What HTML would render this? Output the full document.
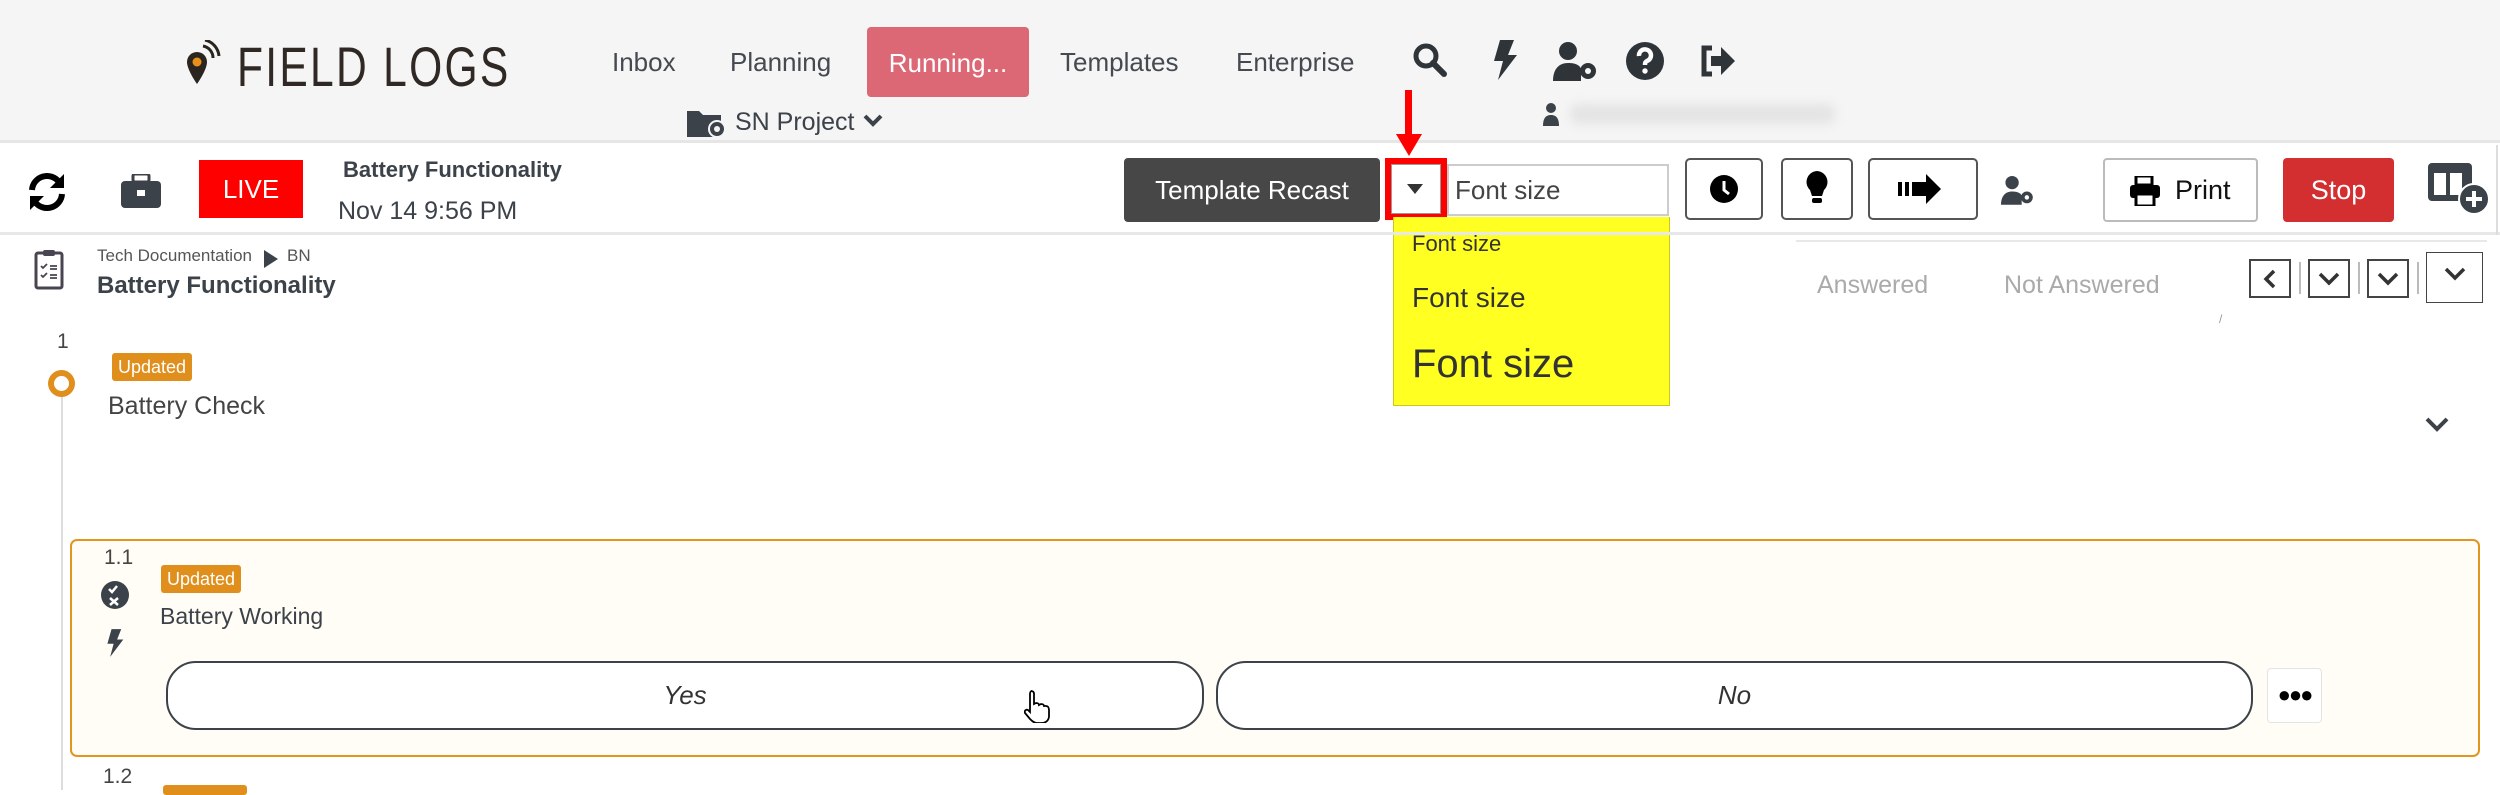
<!DOCTYPE html>
<html><head><meta charset="utf-8"><style>
*{margin:0;padding:0;box-sizing:border-box}
body{width:2500px;height:790px;overflow:hidden;background:#fff;font-family:"Liberation Sans",sans-serif;color:#3a3f45;position:relative}
.a{position:absolute}
.hdr{left:0;top:0;width:2500px;height:143px;background:#f5f5f5;border-bottom:3px solid #e6e6e6}
.nav{top:47px;font-size:26px;color:#444a50}
.bx{border:2px solid #555;border-radius:5px;background:#fff}
.upd{background:#e08f1d;color:#fff;font-size:18px;border-radius:3px;padding:3px 6px;line-height:22px}
.nb{border:2px solid #444;background:#fff;display:flex;align-items:center;justify-content:center}
</style></head><body>
<div class="a hdr"></div>
<svg class="a" style="left:183px;top:40px" width="40" height="50" viewBox="0 0 40 50"><path d="M14 12a10 10 0 0 0-10 10c0 8 10 22 10 22s10-14 10-22a10 10 0 0 0-10-10z" fill="#2b2520"/><circle cx="14" cy="22" r="4.5" fill="#e8901a"/><path d="M20 6a12 12 0 0 1 10 12M22 0a18 18 0 0 1 14 16" stroke="#2b2520" stroke-width="3" fill="none"/></svg>
<div class="a" style="left:237px;top:34px;font-size:56px;color:#2f2824;letter-spacing:3px;font-weight:300;transform:scaleX(0.76);transform-origin:left">FIELD LOGS</div>
<div class="a nav" style="left:612px">Inbox</div>
<div class="a nav" style="left:730px">Planning</div>
<div class="a" style="left:867px;top:27px;width:162px;height:70px;background:#dc6876;border-radius:4px;color:#fff;font-size:26px;text-align:center;line-height:72px">Running...</div>
<div class="a nav" style="left:1060px">Templates</div>
<div class="a nav" style="left:1236px">Enterprise</div>
<svg class="a" style="left:1412px;top:42px" width="36" height="36" viewBox="0 0 36 36"><circle cx="14" cy="14" r="10" stroke="#2f3439" stroke-width="5" fill="none"/><path d="M21 21l11 11" stroke="#2f3439" stroke-width="6" stroke-linecap="round"/></svg>
<svg class="a" style="left:1492px;top:40px" width="26" height="40" viewBox="0 0 26 40"><path d="M8 0h14l-6 15h9L6 40l5-19H2z" fill="#2f3439"/></svg>
<svg class="a" style="left:1553px;top:41px" width="46" height="40" viewBox="0 0 46 40"><circle cx="15" cy="10" r="9" fill="#2f3439"/><path d="M0 40c0-12 6-18 15-18s12 3 13 6v12z" fill="#2f3439"/><circle cx="35" cy="30" r="8" fill="#2f3439"/><circle cx="35" cy="30" r="3" fill="#f5f5f5"/></svg>
<svg class="a" style="left:1626px;top:42px" width="38" height="38" viewBox="0 0 38 38"><circle cx="19" cy="19" r="19" fill="#2f3439"/><path d="M13 14a6 6 0 1 1 8 5c-2 1-2 2-2 4" stroke="#fff" stroke-width="4.5" fill="none"/><circle cx="19" cy="29" r="2.7" fill="#fff"/></svg>
<svg class="a" style="left:1698px;top:44px" width="38" height="34" viewBox="0 0 38 34"><path d="M14 4H6v26h8" stroke="#2f3439" stroke-width="5" fill="none"/><path d="M13 12h10V3l14 14-14 14v-9H13z" fill="#2f3439"/></svg>
<svg class="a" style="left:687px;top:108px" width="40" height="30" viewBox="0 0 40 30"><path d="M0 3h12l4 4h18v22H0z" fill="#3c4249"/><circle cx="30" cy="21" r="8" fill="#3c4249" stroke="#f5f5f5" stroke-width="2"/><circle cx="30" cy="21" r="3" fill="#f5f5f5"/></svg>
<div class="a" style="left:735px;top:108px;font-size:25px;color:#3c4249">SN Project</div>
<svg class="a" style="left:862px;top:113px" width="22" height="16" viewBox="0 0 22 16"><path d="M3 3l8 8 8-8" stroke="#3c4249" stroke-width="4" fill="none"/></svg>
<svg class="a" style="left:1543px;top:102px" width="16" height="24" viewBox="0 0 16 24"><circle cx="8" cy="6" r="5" fill="#3c4249"/><path d="M0 24c0-8 3-11 8-11s8 3 8 11z" fill="#3c4249"/></svg>
<div class="a" style="left:1570px;top:104px;width:265px;height:20px;background:#e4e4e4;filter:blur(5px);border-radius:8px"></div>
<svg class="a" style="left:26px;top:172px" width="42" height="40" viewBox="0 0 42 40"><path d="M6 18A15 15 0 0 1 33 10" stroke="#000" stroke-width="6" fill="none"/><path d="M38 2v14H24z" fill="#000"/><path d="M36 22A15 15 0 0 1 9 30" stroke="#000" stroke-width="6" fill="none"/><path d="M4 38V24h14z" fill="#000"/></svg>
<svg class="a" style="left:121px;top:174px" width="40" height="34" viewBox="0 0 40 34"><rect x="12" y="0" width="16" height="8" rx="2" stroke="#3c4249" stroke-width="3" fill="none"/><rect x="0" y="7" width="40" height="27" rx="4" fill="#3c4249"/><rect x="16" y="16" width="8" height="6" fill="#fff"/></svg>
<div class="a" style="left:199px;top:160px;width:104px;height:58px;background:#f00;color:#fff;font-size:26px;text-align:center;line-height:58px">LIVE</div>
<div class="a" style="left:343px;top:157px;font-size:22px;font-weight:bold;color:#3c4249">Battery Functionality</div>
<div class="a" style="left:338px;top:197px;font-size:25px;color:#3c4249">Nov 14 9:56 PM</div>
<div class="a" style="left:1124px;top:158px;width:256px;height:64px;background:#474747;border-radius:4px;color:#fff;font-size:26px;text-align:center;line-height:64px">Template Recast</div>
<div class="a" style="left:1385px;top:158px;width:62px;height:62px;border:6px solid #f00"></div>
<div class="a" style="left:1391px;top:164px;width:50px;height:50px;background:#fff;border:1px solid #999"></div>
<svg class="a" style="left:1407px;top:184px" width="16" height="10" viewBox="0 0 16 10"><path d="M0 0h16L8 10z" fill="#333"/></svg>
<div class="a" style="left:1447px;top:164px;width:222px;height:52px;background:#fff;border:2px solid #ccc;font-size:26px;color:#444;padding:9px 6px">Font size</div>
<div class="a" style="left:1405px;top:90px;width:7px;height:52px;background:#f00"></div>
<svg class="a" style="left:1396px;top:134px" width="26" height="22" viewBox="0 0 26 22"><path d="M0 0h26L13 22z" fill="#f00"/></svg>
<div class="a" style="left:1393px;top:217px;width:277px;height:189px;background:#ffff22;border:1px solid #c8c820;border-top:none"></div>
<div class="a" style="left:1412px;top:231px;font-size:22px;color:#333">Font size</div>
<div class="a" style="left:1412px;top:282px;font-size:28px;color:#333">Font size</div>
<div class="a" style="left:1412px;top:342px;font-size:40px;color:#333">Font size</div>
<div class="a bx" style="left:1685px;top:158px;width:78px;height:62px"></div>
<svg class="a" style="left:1710px;top:175px" width="28" height="28" viewBox="0 0 28 28"><circle cx="14" cy="14" r="14" fill="#000"/><path d="M14 6v9l5 4" stroke="#fff" stroke-width="3" fill="none"/></svg>
<div class="a bx" style="left:1781px;top:158px;width:72px;height:62px"></div>
<svg class="a" style="left:1806px;top:171px" width="22" height="34" viewBox="0 0 22 34"><path d="M11 0a11 11 0 0 0-7 19l2 6h10l2-6A11 11 0 0 0 11 0z" fill="#000"/><rect x="6" y="27" width="10" height="5" rx="2" fill="#000"/></svg>
<div class="a bx" style="left:1868px;top:158px;width:110px;height:62px"></div>
<svg class="a" style="left:1898px;top:174px" width="50" height="30" viewBox="0 0 50 30"><rect x="0" y="8" width="4" height="14" fill="#000"/><rect x="7" y="8" width="4" height="14" fill="#000"/><path d="M14 8h14V0l15 15-15 15v-8H14z" fill="#000"/></svg>
<svg class="a" style="left:2001px;top:175px" width="34" height="30" viewBox="0 0 46 40"><circle cx="15" cy="10" r="9" fill="#3c4249"/><path d="M0 40c0-12 6-18 15-18s12 3 13 6v12z" fill="#3c4249"/><circle cx="35" cy="30" r="8" fill="#3c4249"/><circle cx="35" cy="30" r="3" fill="#fff"/></svg>
<div class="a" style="left:2103px;top:158px;width:155px;height:64px;border:2px solid #bbb;border-radius:4px;background:#fff"></div>
<svg class="a" style="left:2130px;top:176px" width="30" height="30" viewBox="0 0 30 30"><rect x="6" y="0" width="16" height="9" fill="none" stroke="#000" stroke-width="3"/><rect x="0" y="9" width="30" height="13" rx="3" fill="#000"/><rect x="6" y="18" width="18" height="12" fill="#fff" stroke="#000" stroke-width="3"/></svg>
<div class="a" style="left:2175px;top:175px;font-size:27px;color:#111">Print</div>
<div class="a" style="left:2283px;top:158px;width:111px;height:64px;background:#d32f30;border-radius:4px;color:#fff;font-size:27px;text-align:center;line-height:64px">Stop</div>
<svg class="a" style="left:2428px;top:163px" width="62" height="52" viewBox="0 0 62 52"><rect x="0" y="0" width="44" height="38" rx="4" fill="#3c4249"/><rect x="6" y="10" width="12" height="22" fill="#fff"/><rect x="22" y="10" width="12" height="22" fill="#fff"/><circle cx="46" cy="36" r="15" fill="#3c4249" stroke="#fff" stroke-width="2"/><path d="M46 28v16M38 36h16" stroke="#fff" stroke-width="4"/></svg>
<div class="a" style="left:0;top:232px;width:2500px;height:3px;background:#e8e8e8"></div>
<div class="a" style="left:2496px;top:145px;width:2px;height:90px;background:#ddd"></div>
<svg class="a" style="left:34px;top:248px" width="30" height="42" viewBox="0 0 30 42"><rect x="2" y="5" width="26" height="35" rx="2" fill="none" stroke="#4a4350" stroke-width="3"/><rect x="9" y="2" width="12" height="6" rx="2" fill="#4a4350"/><path d="M7 18l2 2 4-4M7 27l2 2 4-4M16 18h7M16 21h7M16 27h7M16 30h7" stroke="#4a4350" stroke-width="1.8" fill="none"/></svg>
<div class="a" style="left:97px;top:246px;font-size:17px;color:#555">Tech Documentation</div>
<svg class="a" style="left:264px;top:250px" width="14" height="18" viewBox="0 0 14 18"><path d="M0 0l14 9-14 9z" fill="#3c4249"/></svg>
<div class="a" style="left:287px;top:246px;font-size:17px;color:#555">BN</div>
<div class="a" style="left:97px;top:272px;font-size:24px;font-weight:bold;color:#3c4249">Battery Functionality</div>
<div class="a" style="left:1796px;top:240px;width:691px;height:2px;background:#e8e8e8"></div>
<div class="a" style="left:1817px;top:271px;font-size:25px;color:#aaa">Answered</div>
<div class="a" style="left:2004px;top:271px;font-size:25px;color:#aaa">Not Answered</div>
<div class="a" style="left:2219px;top:312px;font-size:12px;color:#999">/</div>
<div class="a nb" style="left:2249px;top:259px;width:42px;height:39px"><svg width="16" height="20" viewBox="0 0 16 20"><path d="M12 2L4 10l8 8" stroke="#333" stroke-width="3.5" fill="none"/></svg></div>
<div class="a" style="left:2299px;top:262px;width:2px;height:32px;background:#bbb"></div>
<div class="a nb" style="left:2308px;top:259px;width:42px;height:39px"><svg width="22" height="14" viewBox="0 0 22 14"><path d="M2 2l9 9 9-9" stroke="#333" stroke-width="3.5" fill="none"/></svg></div>
<div class="a" style="left:2358px;top:262px;width:2px;height:32px;background:#bbb"></div>
<div class="a nb" style="left:2367px;top:259px;width:42px;height:39px"><svg width="22" height="14" viewBox="0 0 22 14"><path d="M2 2l9 9 9-9" stroke="#333" stroke-width="3.5" fill="none"/></svg></div>
<div class="a" style="left:2417px;top:262px;width:2px;height:32px;background:#bbb"></div>
<div class="a nb" style="left:2426px;top:252px;width:57px;height:51px;border-width:1.5px;align-items:flex-start;padding-top:14px"><svg width="22" height="14" viewBox="0 0 22 14"><path d="M2 2l9 9 9-9" stroke="#333" stroke-width="3.5" fill="none"/></svg></div>
<div class="a" style="left:57px;top:330px;font-size:21px;color:#444">1</div>
<div class="a" style="left:61px;top:396px;width:2px;height:394px;background:#ddd"></div>
<div class="a" style="left:48px;top:370px;width:27px;height:27px;border-radius:50%;background:#e08f1d"></div>
<div class="a" style="left:54px;top:376px;width:15px;height:15px;border-radius:50%;background:#fff"></div>
<div class="a upd" style="left:112px;top:353px">Updated</div>
<div class="a" style="left:108px;top:392px;font-size:25px;color:#444">Battery Check</div>
<svg class="a" style="left:2425px;top:416px" width="24" height="16" viewBox="0 0 24 16"><path d="M2 3l10 10 10-10" stroke="#3c4249" stroke-width="4" fill="none"/></svg>
<div class="a" style="left:70px;top:539px;width:2410px;height:218px;background:#fffdf5;border:2px solid #e0961f;border-radius:7px"></div>
<div class="a" style="left:104px;top:546px;font-size:21px;color:#444">1.1</div>
<svg class="a" style="left:101px;top:580px" width="28" height="30" viewBox="0 0 28 30"><circle cx="14" cy="15" r="14" fill="#3c4249"/><path d="M8 9l3 3 5-6M9 18l8 7M17 18l-8 7" stroke="#fff" stroke-width="2.5" fill="none"/></svg>
<svg class="a" style="left:106px;top:628px" width="18" height="30" viewBox="0 0 26 40"><path d="M8 0h14l-6 15h9L6 40l5-19H2z" fill="#3c4249"/></svg>
<div class="a upd" style="left:161px;top:565px">Updated</div>
<div class="a" style="left:160px;top:603px;font-size:23px;color:#3c4249">Battery Working</div>
<div class="a" style="left:166px;top:661px;width:1038px;height:69px;border:2px solid #3c4249;border-radius:30px;background:#fff;text-align:center;line-height:65px;font-size:26px;font-style:italic;color:#333">Yes</div>
<svg class="a" style="left:1024px;top:689px" width="26" height="34" viewBox="0 0 26 34"><path d="M7 2c2 0 3 1 3 3v10l2-1c2 0 3 1 3 2l2-1c2 0 3 1 3 2l2 0c2 0 3 2 3 4v6c0 4-3 7-7 7h-5c-3 0-5-2-7-4l-5-6c-1-2 1-4 3-3l2 2V5c0-2 1-3 2-3z" fill="#fff" stroke="#000" stroke-width="1.8"/></svg>
<div class="a" style="left:1216px;top:661px;width:1037px;height:69px;border:2px solid #3c4249;border-radius:30px;background:#fff;text-align:center;line-height:65px;font-size:26px;font-style:italic;color:#333">No</div>
<div class="a" style="left:2267px;top:668px;width:55px;height:55px;border:1px solid #e4e4e4;border-radius:4px;background:#fff;text-align:center;line-height:52px;font-size:22px;color:#000;letter-spacing:-2px">●●●</div>
<div class="a" style="left:103px;top:765px;font-size:21px;color:#444">1.2</div>
<div class="a" style="left:163px;top:785px;width:84px;height:10px;background:#e08f1d;border-radius:3px"></div>
</body></html>
